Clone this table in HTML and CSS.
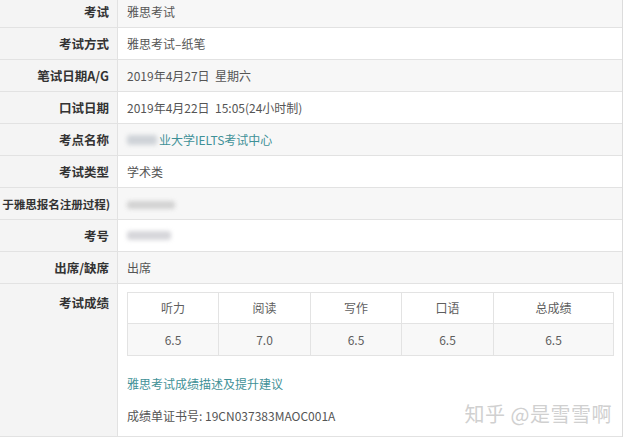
FILE: index.html
```html
<!DOCTYPE html>
<html>
<head>
<meta charset="utf-8">
<link rel="stylesheet" href="styles.css">
</head>
<body>
<div class="page">
  <div class="info">
    <div class="row shade first"><div class="lab">考试</div><div class="val">雅思考试</div></div>
    <div class="row"><div class="lab">考试方式</div><div class="val">雅思考试–纸笔</div></div>
    <div class="row shade"><div class="lab">笔试日期A/G</div><div class="val">2019年4月27日&nbsp; 星期六</div></div>
    <div class="row"><div class="lab">口试日期</div><div class="val">2019年4月22日&nbsp; 15:05(24小时制)</div></div>
    <div class="row shade"><div class="lab">考点名称</div><div class="val link"><span class="blur b1"></span>业大学IELTS考试中心</div></div>
    <div class="row"><div class="lab">考试类型</div><div class="val">学术类</div></div>
    <div class="row shade"><div class="lab tight">于雅思报名注册过程)</div><div class="val"><span class="blur b2"></span></div></div>
    <div class="row"><div class="lab">考号</div><div class="val"><span class="blur b3"></span></div></div>
    <div class="row shade"><div class="lab">出席/缺席</div><div class="val">出席</div></div>
    <div class="row big">
      <div class="lab top">考试成绩</div>
      <div class="val block">
        <div class="scores">
          <div class="sc h">听力</div><div class="sc h">阅读</div><div class="sc h">写作</div><div class="sc h">口语</div><div class="sc h">总成绩</div>
          <div class="sc v">6.5</div><div class="sc v">7.0</div><div class="sc v">6.5</div><div class="sc v">6.5</div><div class="sc v">6.5</div>
        </div>
        <div class="advice">雅思考试成绩描述及提升建议</div>
        <div class="cert">
          <span>成绩单证书号: 19CN037383MAOC001A</span>
          <span class="mark">知乎 @是雪雪啊</span>
        </div>
      </div>
    </div>
  </div>
</div>
</body>
</html>
```
FILE: styles.css
```css
html, body { margin: 0; padding: 0; background: #fff; }
body {
  font-family: "Noto Sans CJK SC", "Noto Sans", sans-serif;
  font-size: 12px;
  color: #555;
  overflow: hidden;
  width: 627px;
  height: 444px;
}
.page { width: 622px; border-right: 1px solid #dcdcdc; }
.info { margin-top: -4px; }
.row {
  display: grid;
  grid-template-columns: 118px 1fr;
  height: 32px;
  box-sizing: border-box;
  border-bottom: 1px solid #e2e2e2;
  background: #fff;
}
.row.shade { background: #f7f7f7; }
.lab {
  background: #f4f4f4;
  border-right: 1px solid #e2e2e2;
  display: flex;
  align-items: center;
  justify-content: flex-end;
  padding-right: 8px;
  font-weight: bold;
  font-size: 12.5px;
  color: #333;
  white-space: nowrap;
  min-width: 0;
}
.lab.tight { font-size: 11.6px; padding-right: 7px; letter-spacing: -0.1px; }
.val {
  display: flex;
  align-items: center;
  padding-left: 9px;
  white-space: nowrap;
}
.link { color: #3f9197; }
.blur {
  display: inline-block;
  background: #c9c9cf;
  filter: blur(2px);
  border-radius: 3px;
}
.b1 { width: 30px; height: 10px; margin-right: 2px; background: #cfd3d8; }
.b2 { width: 48px; height: 8px; background: #d2d2d2; margin-top: 2px; }
.b3 { width: 44px; height: 9px; background: #d6d6da; }
.row.big { height: 153px; border-bottom: 1px solid #e2e2e2; }
.lab.top { align-items: flex-start; padding-top: 9px; }
.val.block {
  display: block;
  padding: 8px 8px 0 9px;
  background: #fff;
}
.scores {
  display: grid;
  grid-template-columns: 91px 92px 91px 92px 1fr;
  width: 487px;
  border: 1px solid #e3e3e3;
  box-sizing: border-box;
}
.sc {
  text-align: center;
  border-right: 1px solid #e3e3e3;
  color: #5e5e5e;
}
.sc:nth-child(5n) { border-right: none; }
.sc.h { height: 30px; line-height: 30px; border-bottom: 1px solid #e3e3e3; background: #fff; }
.sc.v { height: 31px; line-height: 31px; background: #f8f8f8; }
.advice {
  color: #3f9197;
  margin-top: 19px;
  line-height: 18px;
}
.cert {
  display: flex;
  justify-content: space-between;
  align-items: center;
  margin-top: 13px;
  line-height: 20px;
}
.mark {
  font-size: 20px;
  color: #d0d0d0;
  margin-right: 2px;
  margin-top: -4px;
  letter-spacing: 0.5px;
}
```
